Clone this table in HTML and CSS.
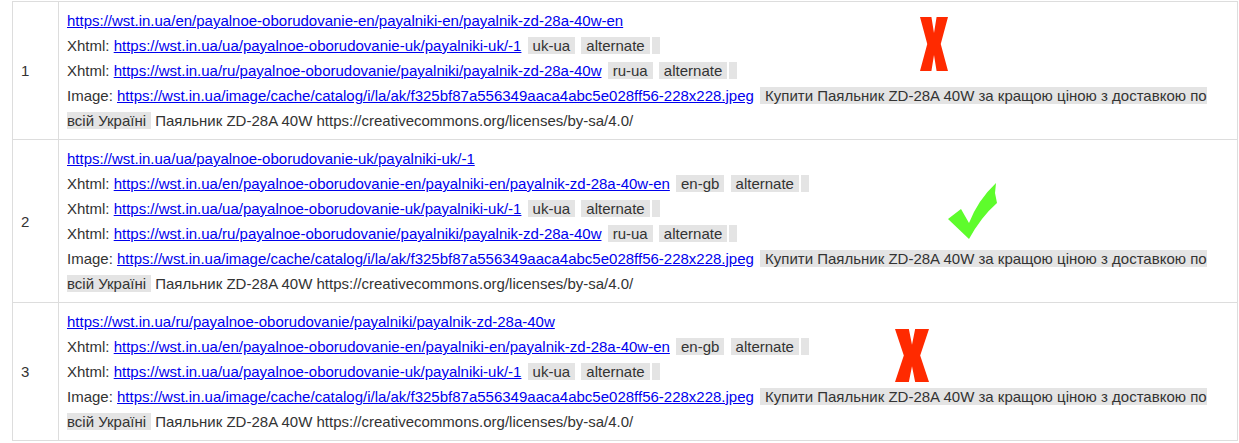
FILE: index.html
```html
<!DOCTYPE html>
<html lang="uk">
<head>
<meta charset="utf-8">
<title>Sitemap</title>
<link rel="stylesheet" href="styles.css">
</head>
<body>
<table class="sitemap">
  <tr>
    <td class="num">1</td>
    <td class="info">
      <div class="line"><a href="#">https://wst.in.ua/en/payalnoe-oborudovanie-en/payalniki-en/payalnik-zd-28a-40w-en</a></div>
      <div class="line">Xhtml: <a href="#">https://wst.in.ua/ua/payalnoe-oborudovanie-uk/payalniki-uk/-1</a> <span class="tag">uk-ua</span> <span class="tag">alternate</span> <span class="tag tag-empty"></span></div>
      <div class="line">Xhtml: <a href="#">https://wst.in.ua/ru/payalnoe-oborudovanie/payalniki/payalnik-zd-28a-40w</a> <span class="tag">ru-ua</span> <span class="tag">alternate</span> <span class="tag tag-empty"></span></div>
      <div class="line">Image: <a href="#">https://wst.in.ua/image/cache/catalog/i/la/ak/f325bf87a556349aaca4abc5e028ff56-228x228.jpeg</a> <span class="tag">Купити Паяльник ZD-28A 40W за кращою ціною з доставкою по всій Україні</span> Паяльник ZD-28A 40W https://creativecommons.org/licenses/by-sa/4.0/</div>
      <svg class="mark mark-x1" viewBox="0 0 27 54" preserveAspectRatio="none"><polygon points="0,0 11,0 13.5,16 16,0 27,0 20,27 27,54 16,54 13.5,38 11,54 0,54 7,27" fill="#ff2a00"/></svg>
    </td>
  </tr>
  <tr>
    <td class="num">2</td>
    <td class="info">
      <div class="line"><a href="#">https://wst.in.ua/ua/payalnoe-oborudovanie-uk/payalniki-uk/-1</a></div>
      <div class="line">Xhtml: <a href="#">https://wst.in.ua/en/payalnoe-oborudovanie-en/payalniki-en/payalnik-zd-28a-40w-en</a> <span class="tag">en-gb</span> <span class="tag">alternate</span> <span class="tag tag-empty"></span></div>
      <div class="line">Xhtml: <a href="#">https://wst.in.ua/ua/payalnoe-oborudovanie-uk/payalniki-uk/-1</a> <span class="tag">uk-ua</span> <span class="tag">alternate</span> <span class="tag tag-empty"></span></div>
      <div class="line">Xhtml: <a href="#">https://wst.in.ua/ru/payalnoe-oborudovanie/payalniki/payalnik-zd-28a-40w</a> <span class="tag">ru-ua</span> <span class="tag">alternate</span> <span class="tag tag-empty"></span></div>
      <div class="line">Image: <a href="#">https://wst.in.ua/image/cache/catalog/i/la/ak/f325bf87a556349aaca4abc5e028ff56-228x228.jpeg</a> <span class="tag">Купити Паяльник ZD-28A 40W за кращою ціною з доставкою по всій Україні</span> Паяльник ZD-28A 40W https://creativecommons.org/licenses/by-sa/4.0/</div>
      <svg class="mark mark-check" viewBox="0 0 49 56"><path d="M0 36 L13 26 L21 40 Q30 17 48 0 L47 10 L49 20 Q33 34 21 56 Z" fill="#5efc2c"/></svg>
    </td>
  </tr>
  <tr>
    <td class="num">3</td>
    <td class="info">
      <div class="line"><a href="#">https://wst.in.ua/ru/payalnoe-oborudovanie/payalniki/payalnik-zd-28a-40w</a></div>
      <div class="line">Xhtml: <a href="#">https://wst.in.ua/en/payalnoe-oborudovanie-en/payalniki-en/payalnik-zd-28a-40w-en</a> <span class="tag">en-gb</span> <span class="tag">alternate</span> <span class="tag tag-empty"></span></div>
      <div class="line">Xhtml: <a href="#">https://wst.in.ua/ua/payalnoe-oborudovanie-uk/payalniki-uk/-1</a> <span class="tag">uk-ua</span> <span class="tag">alternate</span> <span class="tag tag-empty"></span></div>
      <div class="line">Image: <a href="#">https://wst.in.ua/image/cache/catalog/i/la/ak/f325bf87a556349aaca4abc5e028ff56-228x228.jpeg</a> <span class="tag">Купити Паяльник ZD-28A 40W за кращою ціною з доставкою по всій Україні</span> Паяльник ZD-28A 40W https://creativecommons.org/licenses/by-sa/4.0/</div>
      <svg class="mark mark-x3" viewBox="0 0 27 54" preserveAspectRatio="none"><polygon points="0,0 11,0 13.5,16 16,0 27,0 20,27 27,54 16,54 13.5,38 11,54 0,54 7,27" fill="#ff2a00"/></svg>
    </td>
  </tr>
</table>
</body>
</html>
```

FILE: styles.css
```css
html, body {
  margin: 0;
  background: #fff;
}
body {
  padding: 1px 0 0 12px;
  font-family: "Liberation Sans", Arial, sans-serif;
  font-size: 15px;
  color: #333;
}
.sitemap {
  border-collapse: collapse;
  width: 1226px;
}
.sitemap td {
  border: 1px solid #ddd;
  padding: 6px 8px;
  line-height: 25px;
  vertical-align: middle;
}
.sitemap td.num {
  width: 29px;
}
.info {
  position: relative;
}
.line a {
  color: #0000ee;
  text-decoration: underline;
}
.tag {
  background: #e4e4e4;
  padding: 0 5px;
  margin-left: 2px;
}
.tag-empty {
  padding: 0 4px;
}
.mark {
  position: absolute;
  display: block;
}
.mark-x1 {
  left: 861px;
  top: 15px;
  width: 28px;
  height: 54px;
}
.mark-check {
  left: 889px;
  top: 43px;
  width: 49px;
  height: 56px;
}
.mark-x3 {
  left: 836px;
  top: 26px;
  width: 34px;
  height: 53px;
}
```
